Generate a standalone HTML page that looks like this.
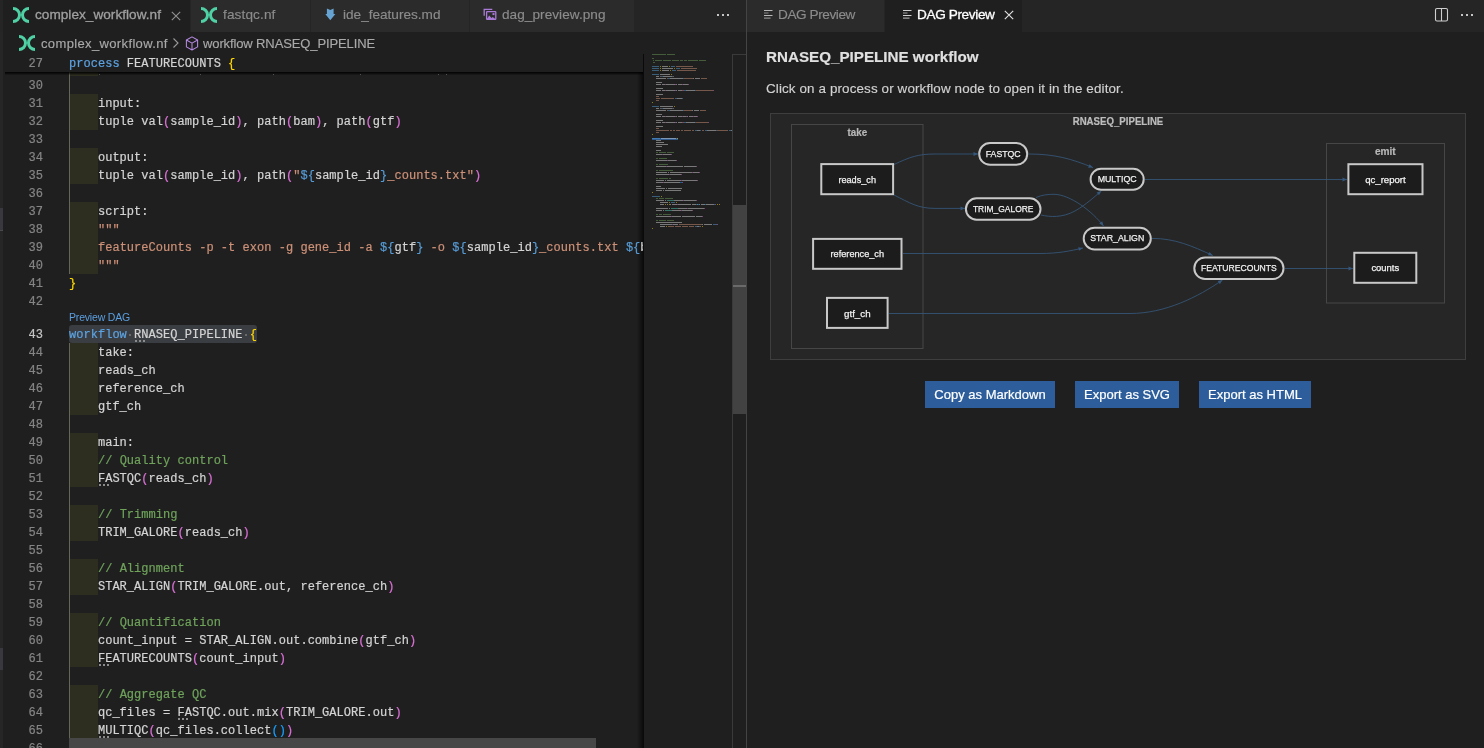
<!DOCTYPE html>
<html><head><meta charset="utf-8">
<style>
*{margin:0;padding:0;box-sizing:border-box}
html,body{width:1484px;height:748px;overflow:hidden;background:#1f1f1f;font-family:"Liberation Sans",sans-serif}
.abs{position:absolute}
#tabsL{position:absolute;left:0;top:0;width:746px;height:32px;background:#252525}
#tabsR{position:absolute;left:747px;top:0;width:737px;height:32px;background:#252525}
.tab{position:absolute;top:0;height:32px;background:#2b2b2b;color:#8c8c8c;font-size:13.6px;line-height:32px;white-space:nowrap}
.tab span{will-change:transform;-webkit-text-stroke:0.15px currentColor}
.tab.act span{-webkit-text-stroke:0.3px currentColor}
.tab.act{background:#1f1f1f}
.code{position:absolute;left:0;top:0;width:643px;height:748px;overflow:hidden}
.ln{position:absolute;left:0;width:43px;text-align:right;font-family:"Liberation Mono",monospace;font-size:12px;line-height:18px;color:#858585;padding-top:1px;will-change:transform;-webkit-text-stroke:0.2px currentColor}
.cl{position:absolute;left:69px;font-family:"Liberation Mono",monospace;font-size:12px;line-height:18px;color:#d4d4d4;white-space:pre;padding-top:1px;letter-spacing:0.03px;will-change:transform;-webkit-text-stroke:0.2px currentColor}
.k{color:#5da3e2}.b{color:#ffd700}.p{color:#da70d6}.s{color:#ce9178}.c{color:#6fa35b}.i{color:#569cd6}.q{color:#179fff}
.ind{position:absolute;left:70px;width:28px;height:18px;background:#2d2d20}
.guide{position:absolute;left:69px;width:1px;background:#65655b}
.btn{position:absolute;top:381px;height:27px;background:#2d5e9b;color:#fff;font-size:13px;line-height:27px;text-align:center;will-change:transform;-webkit-text-stroke:0.2px #fff}

.cl span{-webkit-text-stroke:0.2px currentColor}
.txt{will-change:transform;-webkit-text-stroke:0.15px currentColor}

</style></head><body>
<div class="abs" style="left:0;top:32px;width:3px;height:716px;background:#262626"></div>
<div class="abs" style="left:0;top:208px;width:3px;height:23px;background:#38383e;border-bottom:1px solid #4a4a4e"></div>
<div class="abs" style="left:0;top:648px;width:3px;height:22px;background:#38383e"></div>
<div id="tabsL">
<div class="tab act" style="left:3px;width:187px;color:#a0a0a0"><svg class="abs" style="left:10px;top:7px" width="16" height="16" viewBox="0 0 16 16"><path d="M0 1.5 A6.5 6.5 0 0 1 0 14.5 M16 1.5 A6.5 6.5 0 0 0 16 14.5" stroke="#4fd1a5" stroke-width="3" fill="none"/></svg><span style="left:32px;position:absolute;top:-1px;letter-spacing:0.03px">complex_workflow.nf</span><svg class="abs" style="left:168px;top:11px" width="10" height="10" viewBox="0 0 10 10"><path d="M0.8 0.8 L9.2 9.2 M9.2 0.8 L0.8 9.2" stroke="#8f8f8f" stroke-width="1.15"/></svg></div>
<div class="tab" style="left:191px;width:119px"><svg class="abs" style="left:10px;top:7px" width="16" height="16" viewBox="0 0 16 16"><path d="M0 1.5 A6.5 6.5 0 0 1 0 14.5 M16 1.5 A6.5 6.5 0 0 0 16 14.5" stroke="#4fd1a5" stroke-width="3" fill="none"/></svg><span style="left:32px;position:absolute;top:-1px;letter-spacing:0.12px">fastqc.nf</span></div>
<div class="tab" style="left:311px;width:158px"><svg class="abs" style="left:14px;top:8px" width="11" height="13" viewBox="0 0 11 13"><path d="M1.9 0.5 L5.3 1.9 L8.6 0.5 L8.6 6 L10.4 6 L5.3 12.3 L0.3 6 L1.9 6 Z" fill="#66a3d2"/></svg><span style="left:32px;position:absolute;top:-1px;letter-spacing:0.0px">ide_features.md</span></div>
<div class="tab" style="left:470px;width:164px"><svg class="abs" style="left:13px;top:8px" width="14" height="13" viewBox="0 0 14 13"><path d="M1.2 7.8 V1.3 H9.3" stroke="#a97bd6" stroke-width="1.3" fill="none"/><rect x="3.6" y="3.6" width="9.2" height="7.8" rx="0.6" fill="none" stroke="#a97bd6" stroke-width="1.3"/><path d="M3.6 11.4 L6.2 7.6 L8.5 10 L9.8 9 L12.8 11.4 Z" fill="#a97bd6"/><rect x="9.5" y="5.1" width="2" height="2" fill="#a97bd6"/></svg><span style="left:32px;position:absolute;top:-1px;letter-spacing:0.05px">dag_preview.png</span></div>
<div class="abs" style="left:717px;top:14px;width:2px;height:2px;background:#c5c5c5"></div><div class="abs" style="left:722px;top:14px;width:2px;height:2px;background:#c5c5c5"></div><div class="abs" style="left:727px;top:14px;width:2px;height:2px;background:#c5c5c5"></div>
</div>
<div class="abs" style="left:746px;top:0;width:1px;height:748px;background:#444"></div>
<div id="tabsR">
<div class="tab" style="left:0;width:137px"><svg class="abs" style="left:16.5px;top:10px" width="10" height="10" viewBox="0 0 10 10"><path d="M0 0.5H8.5M0 5.5H8.5" stroke="#b8b8b8" stroke-width="1.2"/><path d="M0 3H4.5M0 8.1H6.5" stroke="#8a8a8a" stroke-width="1.2"/></svg><span style="left:31px;position:absolute;top:-1px;letter-spacing:-0.42px">DAG Preview</span></div>
<div class="tab act" style="left:138px;width:137px;color:#ffffff"><svg class="abs" style="left:17.5px;top:10px" width="10" height="10" viewBox="0 0 10 10"><path d="M0 0.5H8.5M0 5.5H8.5" stroke="#d0d0d0" stroke-width="1.2"/><path d="M0 3H4.5M0 8.1H6.5" stroke="#a0a0a0" stroke-width="1.2"/></svg><span style="left:32px;position:absolute;top:-1px;letter-spacing:-0.37px">DAG Preview</span><svg class="abs" style="left:119px;top:10px" width="10" height="10" viewBox="0 0 10 10"><path d="M0.8 0.8 L9.2 9.2 M9.2 0.8 L0.8 9.2" stroke="#e0e0e0" stroke-width="1.15"/></svg></div>
<svg class="abs" style="left:687px;top:7px" width="15" height="15" viewBox="0 0 15 15"><rect x="1.5" y="1.5" width="12" height="12.5" rx="1.5" fill="none" stroke="#cfcfcf" stroke-width="1.1"/><path d="M7.5 1.5V14" stroke="#cfcfcf" stroke-width="1.1"/></svg>
<div class="abs" style="left:714px;top:14px;width:2px;height:2px;background:#c5c5c5"></div><div class="abs" style="left:719px;top:14px;width:2px;height:2px;background:#c5c5c5"></div><div class="abs" style="left:724px;top:14px;width:2px;height:2px;background:#c5c5c5"></div>
</div>
<div class="abs" style="left:0;top:32px;width:746px;height:22px;font-size:13px;line-height:22px;color:#a9a9a9;white-space:nowrap;will-change:transform;-webkit-text-stroke:0.15px #a9a9a9">
<svg class="abs" style="left:19px;top:3px" width="16" height="16" viewBox="0 0 16 16"><path d="M0 1.5 A6.5 6.5 0 0 1 0 14.5 M16 1.5 A6.5 6.5 0 0 0 16 14.5" stroke="#4fd1a5" stroke-width="3" fill="none"/></svg>
<span class="abs" style="left:41px;top:1px;letter-spacing:0.36px">complex_workflow.nf</span>
<svg class="abs" style="left:172px;top:6px" width="8" height="11" viewBox="0 0 8 11"><path d="M1.5 0.5 L6 5 L1.5 9.5" stroke="#9a9a9a" stroke-width="1.1" fill="none"/></svg>
<svg class="abs" style="left:185px;top:4px" width="14" height="15" viewBox="0 0 14 15"><path d="M7 0.9 L12.6 4 V10.9 L7 14 L1.4 10.9 V4 Z M1.4 4 L7 7.1 L12.6 4 M7 7.1 V14" stroke="#b58ae2" stroke-width="1.05" fill="none" stroke-linejoin="round"/></svg>
<span class="abs" style="left:203px;top:1px;letter-spacing:-0.12px">workflow RNASEQ_PIPELINE</span>
</div>
<div class="abs" style="left:637px;top:54px;width:7px;height:694px;background:linear-gradient(to right,rgba(0,0,0,0),rgba(0,0,0,0.7))"></div>
<div class="abs" style="left:644px;top:54px;width:89px;height:694px;background:#1f1f1f"></div>
<div class="abs" style="left:652px;top:138px;width:26px;height:2px;background:#2f5b8f"></div>
<svg class="abs" style="left:644px;top:54px" width="89" height="694" viewBox="644 54 89 694"><rect x="652" y="54" width="14" height="1" fill="#6a9955" opacity="0.5"/><rect x="667" y="54" width="8" height="1" fill="#6a9955" opacity="0.5"/><rect x="652" y="58" width="2" height="1" fill="#6a9955" opacity="0.5"/><rect x="653" y="60" width="1" height="1" fill="#6a9955" opacity="0.5"/><rect x="655" y="60" width="7" height="1" fill="#6a9955" opacity="0.5"/><rect x="663" y="60" width="8" height="1" fill="#6a9955" opacity="0.5"/><rect x="672" y="60" width="7" height="1" fill="#6a9955" opacity="0.5"/><rect x="680" y="60" width="3" height="1" fill="#6a9955" opacity="0.5"/><rect x="684" y="60" width="3" height="1" fill="#6a9955" opacity="0.5"/><rect x="688" y="60" width="10" height="1" fill="#6a9955" opacity="0.5"/><rect x="699" y="60" width="7" height="1" fill="#6a9955" opacity="0.5"/><rect x="653" y="62" width="2" height="1" fill="#6a9955" opacity="0.5"/><rect x="652" y="66" width="7" height="1" fill="#569cd6" opacity="0.5"/><rect x="660" y="66" width="1" height="1" fill="#ffd700" opacity="0.5"/><rect x="662" y="66" width="6" height="1" fill="#d4d4d4" opacity="0.5"/><rect x="669" y="66" width="1" height="1" fill="#ffd700" opacity="0.5"/><rect x="671" y="66" width="4" height="1" fill="#569cd6" opacity="0.5"/><rect x="676" y="66" width="17" height="1" fill="#ce9178" opacity="0.5"/><rect x="652" y="68" width="7" height="1" fill="#569cd6" opacity="0.5"/><rect x="660" y="68" width="1" height="1" fill="#ffd700" opacity="0.5"/><rect x="662" y="68" width="11" height="1" fill="#d4d4d4" opacity="0.5"/><rect x="674" y="68" width="1" height="1" fill="#ffd700" opacity="0.5"/><rect x="676" y="68" width="4" height="1" fill="#569cd6" opacity="0.5"/><rect x="681" y="68" width="16" height="1" fill="#ce9178" opacity="0.5"/><rect x="652" y="70" width="7" height="1" fill="#569cd6" opacity="0.5"/><rect x="660" y="70" width="1" height="1" fill="#ffd700" opacity="0.5"/><rect x="662" y="70" width="7" height="1" fill="#d4d4d4" opacity="0.5"/><rect x="670" y="70" width="1" height="1" fill="#ffd700" opacity="0.5"/><rect x="672" y="70" width="4" height="1" fill="#569cd6" opacity="0.5"/><rect x="677" y="70" width="19" height="1" fill="#ce9178" opacity="0.5"/><rect x="652" y="74" width="7" height="1" fill="#569cd6" opacity="0.5"/><rect x="660" y="74" width="10" height="1" fill="#d4d4d4" opacity="0.5"/><rect x="671" y="74" width="1" height="1" fill="#ffd700" opacity="0.5"/><rect x="656" y="76" width="3" height="1" fill="#d4d4d4" opacity="0.5"/><rect x="660" y="76" width="1" height="1" fill="#ce9178" opacity="0.5"/><rect x="661" y="76" width="2" height="1" fill="#569cd6" opacity="0.5"/><rect x="663" y="76" width="9" height="1" fill="#d4d4d4" opacity="0.5"/><rect x="672" y="76" width="1" height="1" fill="#569cd6" opacity="0.5"/><rect x="673" y="76" width="1" height="1" fill="#ce9178" opacity="0.5"/><rect x="656" y="78" width="10" height="1" fill="#d4d4d4" opacity="0.5"/><rect x="667" y="78" width="1" height="1" fill="#ce9178" opacity="0.5"/><rect x="668" y="78" width="2" height="1" fill="#569cd6" opacity="0.5"/><rect x="670" y="78" width="13" height="1" fill="#d4d4d4" opacity="0.5"/><rect x="683" y="78" width="1" height="1" fill="#569cd6" opacity="0.5"/><rect x="684" y="78" width="9" height="1" fill="#ce9178" opacity="0.5"/><rect x="693" y="78" width="1" height="1" fill="#d4d4d4" opacity="0.5"/><rect x="695" y="78" width="5" height="1" fill="#d4d4d4" opacity="0.5"/><rect x="701" y="78" width="6" height="1" fill="#ce9178" opacity="0.5"/><rect x="656" y="82" width="6" height="1" fill="#d4d4d4" opacity="0.5"/><rect x="656" y="84" width="5" height="1" fill="#d4d4d4" opacity="0.5"/><rect x="662" y="84" width="3" height="1" fill="#d4d4d4" opacity="0.5"/><rect x="665" y="84" width="1" height="1" fill="#da70d6" opacity="0.5"/><rect x="666" y="84" width="9" height="1" fill="#d4d4d4" opacity="0.5"/><rect x="675" y="84" width="1" height="1" fill="#da70d6" opacity="0.5"/><rect x="676" y="84" width="1" height="1" fill="#d4d4d4" opacity="0.5"/><rect x="678" y="84" width="4" height="1" fill="#d4d4d4" opacity="0.5"/><rect x="682" y="84" width="1" height="1" fill="#da70d6" opacity="0.5"/><rect x="683" y="84" width="5" height="1" fill="#d4d4d4" opacity="0.5"/><rect x="688" y="84" width="1" height="1" fill="#da70d6" opacity="0.5"/><rect x="656" y="88" width="7" height="1" fill="#d4d4d4" opacity="0.5"/><rect x="656" y="90" width="5" height="1" fill="#d4d4d4" opacity="0.5"/><rect x="662" y="90" width="3" height="1" fill="#d4d4d4" opacity="0.5"/><rect x="665" y="90" width="1" height="1" fill="#da70d6" opacity="0.5"/><rect x="666" y="90" width="9" height="1" fill="#d4d4d4" opacity="0.5"/><rect x="675" y="90" width="1" height="1" fill="#da70d6" opacity="0.5"/><rect x="676" y="90" width="1" height="1" fill="#d4d4d4" opacity="0.5"/><rect x="678" y="90" width="4" height="1" fill="#d4d4d4" opacity="0.5"/><rect x="682" y="90" width="1" height="1" fill="#da70d6" opacity="0.5"/><rect x="683" y="90" width="1" height="1" fill="#ce9178" opacity="0.5"/><rect x="684" y="90" width="2" height="1" fill="#569cd6" opacity="0.5"/><rect x="686" y="90" width="9" height="1" fill="#d4d4d4" opacity="0.5"/><rect x="695" y="90" width="1" height="1" fill="#569cd6" opacity="0.5"/><rect x="696" y="90" width="17" height="1" fill="#ce9178" opacity="0.5"/><rect x="713" y="90" width="1" height="1" fill="#da70d6" opacity="0.5"/><rect x="656" y="94" width="7" height="1" fill="#d4d4d4" opacity="0.5"/><rect x="656" y="96" width="3" height="1" fill="#ce9178" opacity="0.5"/><rect x="656" y="98" width="4" height="1" fill="#ce9178" opacity="0.5"/><rect x="661" y="98" width="13" height="1" fill="#ce9178" opacity="0.5"/><rect x="675" y="98" width="2" height="1" fill="#569cd6" opacity="0.5"/><rect x="677" y="98" width="5" height="1" fill="#d4d4d4" opacity="0.5"/><rect x="682" y="98" width="1" height="1" fill="#569cd6" opacity="0.5"/><rect x="656" y="100" width="3" height="1" fill="#ce9178" opacity="0.5"/><rect x="652" y="102" width="1" height="1" fill="#ffd700" opacity="0.5"/><rect x="652" y="106" width="7" height="1" fill="#569cd6" opacity="0.5"/><rect x="660" y="106" width="13" height="1" fill="#d4d4d4" opacity="0.5"/><rect x="674" y="106" width="1" height="1" fill="#ffd700" opacity="0.5"/><rect x="656" y="108" width="3" height="1" fill="#d4d4d4" opacity="0.5"/><rect x="660" y="108" width="1" height="1" fill="#ce9178" opacity="0.5"/><rect x="661" y="108" width="2" height="1" fill="#569cd6" opacity="0.5"/><rect x="663" y="108" width="9" height="1" fill="#d4d4d4" opacity="0.5"/><rect x="672" y="108" width="1" height="1" fill="#569cd6" opacity="0.5"/><rect x="673" y="108" width="1" height="1" fill="#ce9178" opacity="0.5"/><rect x="656" y="110" width="10" height="1" fill="#d4d4d4" opacity="0.5"/><rect x="667" y="110" width="1" height="1" fill="#ce9178" opacity="0.5"/><rect x="668" y="110" width="2" height="1" fill="#569cd6" opacity="0.5"/><rect x="670" y="110" width="13" height="1" fill="#d4d4d4" opacity="0.5"/><rect x="683" y="110" width="1" height="1" fill="#569cd6" opacity="0.5"/><rect x="684" y="110" width="8" height="1" fill="#ce9178" opacity="0.5"/><rect x="692" y="110" width="1" height="1" fill="#d4d4d4" opacity="0.5"/><rect x="694" y="110" width="5" height="1" fill="#d4d4d4" opacity="0.5"/><rect x="700" y="110" width="6" height="1" fill="#ce9178" opacity="0.5"/><rect x="656" y="114" width="6" height="1" fill="#d4d4d4" opacity="0.5"/><rect x="656" y="116" width="5" height="1" fill="#d4d4d4" opacity="0.5"/><rect x="662" y="116" width="3" height="1" fill="#d4d4d4" opacity="0.5"/><rect x="665" y="116" width="1" height="1" fill="#da70d6" opacity="0.5"/><rect x="666" y="116" width="9" height="1" fill="#d4d4d4" opacity="0.5"/><rect x="675" y="116" width="1" height="1" fill="#da70d6" opacity="0.5"/><rect x="676" y="116" width="1" height="1" fill="#d4d4d4" opacity="0.5"/><rect x="678" y="116" width="4" height="1" fill="#d4d4d4" opacity="0.5"/><rect x="682" y="116" width="1" height="1" fill="#da70d6" opacity="0.5"/><rect x="683" y="116" width="3" height="1" fill="#d4d4d4" opacity="0.5"/><rect x="686" y="116" width="1" height="1" fill="#da70d6" opacity="0.5"/><rect x="687" y="116" width="1" height="1" fill="#d4d4d4" opacity="0.5"/><rect x="689" y="116" width="4" height="1" fill="#d4d4d4" opacity="0.5"/><rect x="693" y="116" width="1" height="1" fill="#da70d6" opacity="0.5"/><rect x="694" y="116" width="3" height="1" fill="#d4d4d4" opacity="0.5"/><rect x="697" y="116" width="1" height="1" fill="#da70d6" opacity="0.5"/><rect x="656" y="120" width="7" height="1" fill="#d4d4d4" opacity="0.5"/><rect x="656" y="122" width="5" height="1" fill="#d4d4d4" opacity="0.5"/><rect x="662" y="122" width="3" height="1" fill="#d4d4d4" opacity="0.5"/><rect x="665" y="122" width="1" height="1" fill="#da70d6" opacity="0.5"/><rect x="666" y="122" width="9" height="1" fill="#d4d4d4" opacity="0.5"/><rect x="675" y="122" width="1" height="1" fill="#da70d6" opacity="0.5"/><rect x="676" y="122" width="1" height="1" fill="#d4d4d4" opacity="0.5"/><rect x="678" y="122" width="4" height="1" fill="#d4d4d4" opacity="0.5"/><rect x="682" y="122" width="1" height="1" fill="#da70d6" opacity="0.5"/><rect x="683" y="122" width="1" height="1" fill="#ce9178" opacity="0.5"/><rect x="684" y="122" width="2" height="1" fill="#569cd6" opacity="0.5"/><rect x="686" y="122" width="9" height="1" fill="#d4d4d4" opacity="0.5"/><rect x="695" y="122" width="1" height="1" fill="#569cd6" opacity="0.5"/><rect x="696" y="122" width="12" height="1" fill="#ce9178" opacity="0.5"/><rect x="708" y="122" width="1" height="1" fill="#da70d6" opacity="0.5"/><rect x="656" y="126" width="7" height="1" fill="#d4d4d4" opacity="0.5"/><rect x="656" y="128" width="3" height="1" fill="#ce9178" opacity="0.5"/><rect x="656" y="130" width="13" height="1" fill="#ce9178" opacity="0.5"/><rect x="670" y="130" width="2" height="1" fill="#ce9178" opacity="0.5"/><rect x="673" y="130" width="2" height="1" fill="#ce9178" opacity="0.5"/><rect x="676" y="130" width="4" height="1" fill="#ce9178" opacity="0.5"/><rect x="681" y="130" width="2" height="1" fill="#ce9178" opacity="0.5"/><rect x="684" y="130" width="7" height="1" fill="#ce9178" opacity="0.5"/><rect x="692" y="130" width="2" height="1" fill="#ce9178" opacity="0.5"/><rect x="695" y="130" width="2" height="1" fill="#569cd6" opacity="0.5"/><rect x="697" y="130" width="3" height="1" fill="#d4d4d4" opacity="0.5"/><rect x="700" y="130" width="1" height="1" fill="#569cd6" opacity="0.5"/><rect x="702" y="130" width="2" height="1" fill="#ce9178" opacity="0.5"/><rect x="705" y="130" width="2" height="1" fill="#569cd6" opacity="0.5"/><rect x="707" y="130" width="9" height="1" fill="#d4d4d4" opacity="0.5"/><rect x="716" y="130" width="1" height="1" fill="#569cd6" opacity="0.5"/><rect x="717" y="130" width="11" height="1" fill="#ce9178" opacity="0.5"/><rect x="729" y="130" width="2" height="1" fill="#569cd6" opacity="0.5"/><rect x="731" y="130" width="1" height="1" fill="#d4d4d4" opacity="0.5"/><rect x="656" y="132" width="3" height="1" fill="#ce9178" opacity="0.5"/><rect x="652" y="134" width="1" height="1" fill="#ffd700" opacity="0.5"/><rect x="652" y="138" width="8" height="1" fill="#569cd6" opacity="0.5"/><rect x="661" y="138" width="15" height="1" fill="#d4d4d4" opacity="0.5"/><rect x="677" y="138" width="1" height="1" fill="#ffd700" opacity="0.5"/><rect x="656" y="140" width="5" height="1" fill="#d4d4d4" opacity="0.5"/><rect x="656" y="142" width="8" height="1" fill="#d4d4d4" opacity="0.5"/><rect x="656" y="144" width="12" height="1" fill="#d4d4d4" opacity="0.5"/><rect x="656" y="146" width="6" height="1" fill="#d4d4d4" opacity="0.5"/><rect x="656" y="150" width="5" height="1" fill="#d4d4d4" opacity="0.5"/><rect x="656" y="152" width="2" height="1" fill="#6a9955" opacity="0.5"/><rect x="659" y="152" width="7" height="1" fill="#6a9955" opacity="0.5"/><rect x="667" y="152" width="7" height="1" fill="#6a9955" opacity="0.5"/><rect x="656" y="154" width="6" height="1" fill="#d4d4d4" opacity="0.5"/><rect x="662" y="154" width="1" height="1" fill="#da70d6" opacity="0.5"/><rect x="663" y="154" width="8" height="1" fill="#d4d4d4" opacity="0.5"/><rect x="671" y="154" width="1" height="1" fill="#da70d6" opacity="0.5"/><rect x="656" y="158" width="2" height="1" fill="#6a9955" opacity="0.5"/><rect x="659" y="158" width="8" height="1" fill="#6a9955" opacity="0.5"/><rect x="656" y="160" width="11" height="1" fill="#d4d4d4" opacity="0.5"/><rect x="667" y="160" width="1" height="1" fill="#da70d6" opacity="0.5"/><rect x="668" y="160" width="8" height="1" fill="#d4d4d4" opacity="0.5"/><rect x="676" y="160" width="1" height="1" fill="#da70d6" opacity="0.5"/><rect x="656" y="164" width="2" height="1" fill="#6a9955" opacity="0.5"/><rect x="659" y="164" width="9" height="1" fill="#6a9955" opacity="0.5"/><rect x="656" y="166" width="10" height="1" fill="#d4d4d4" opacity="0.5"/><rect x="666" y="166" width="1" height="1" fill="#da70d6" opacity="0.5"/><rect x="667" y="166" width="16" height="1" fill="#d4d4d4" opacity="0.5"/><rect x="684" y="166" width="12" height="1" fill="#d4d4d4" opacity="0.5"/><rect x="696" y="166" width="1" height="1" fill="#da70d6" opacity="0.5"/><rect x="656" y="170" width="2" height="1" fill="#6a9955" opacity="0.5"/><rect x="659" y="170" width="14" height="1" fill="#6a9955" opacity="0.5"/><rect x="656" y="172" width="11" height="1" fill="#d4d4d4" opacity="0.5"/><rect x="668" y="172" width="1" height="1" fill="#d4d4d4" opacity="0.5"/><rect x="670" y="172" width="22" height="1" fill="#d4d4d4" opacity="0.5"/><rect x="692" y="172" width="1" height="1" fill="#da70d6" opacity="0.5"/><rect x="693" y="172" width="6" height="1" fill="#d4d4d4" opacity="0.5"/><rect x="699" y="172" width="1" height="1" fill="#da70d6" opacity="0.5"/><rect x="656" y="174" width="13" height="1" fill="#d4d4d4" opacity="0.5"/><rect x="669" y="174" width="1" height="1" fill="#da70d6" opacity="0.5"/><rect x="670" y="174" width="11" height="1" fill="#d4d4d4" opacity="0.5"/><rect x="681" y="174" width="1" height="1" fill="#da70d6" opacity="0.5"/><rect x="656" y="178" width="2" height="1" fill="#6a9955" opacity="0.5"/><rect x="659" y="178" width="9" height="1" fill="#6a9955" opacity="0.5"/><rect x="669" y="178" width="2" height="1" fill="#6a9955" opacity="0.5"/><rect x="656" y="180" width="8" height="1" fill="#d4d4d4" opacity="0.5"/><rect x="665" y="180" width="1" height="1" fill="#d4d4d4" opacity="0.5"/><rect x="667" y="180" width="14" height="1" fill="#d4d4d4" opacity="0.5"/><rect x="681" y="180" width="1" height="1" fill="#da70d6" opacity="0.5"/><rect x="682" y="180" width="15" height="1" fill="#d4d4d4" opacity="0.5"/><rect x="697" y="180" width="1" height="1" fill="#da70d6" opacity="0.5"/><rect x="656" y="182" width="7" height="1" fill="#d4d4d4" opacity="0.5"/><rect x="663" y="182" width="1" height="1" fill="#da70d6" opacity="0.5"/><rect x="664" y="182" width="16" height="1" fill="#d4d4d4" opacity="0.5"/><rect x="680" y="182" width="2" height="1" fill="#179fff" opacity="0.5"/><rect x="682" y="182" width="1" height="1" fill="#da70d6" opacity="0.5"/><rect x="656" y="186" width="5" height="1" fill="#d4d4d4" opacity="0.5"/><rect x="656" y="188" width="9" height="1" fill="#d4d4d4" opacity="0.5"/><rect x="666" y="188" width="1" height="1" fill="#d4d4d4" opacity="0.5"/><rect x="668" y="188" width="14" height="1" fill="#d4d4d4" opacity="0.5"/><rect x="656" y="190" width="6" height="1" fill="#d4d4d4" opacity="0.5"/><rect x="663" y="190" width="1" height="1" fill="#d4d4d4" opacity="0.5"/><rect x="665" y="190" width="16" height="1" fill="#d4d4d4" opacity="0.5"/><rect x="652" y="192" width="1" height="1" fill="#ffd700" opacity="0.5"/><rect x="652" y="196" width="8" height="1" fill="#569cd6" opacity="0.5"/><rect x="661" y="196" width="1" height="1" fill="#ffd700" opacity="0.5"/><rect x="656" y="198" width="2" height="1" fill="#6a9955" opacity="0.5"/><rect x="659" y="198" width="5" height="1" fill="#6a9955" opacity="0.5"/><rect x="665" y="198" width="8" height="1" fill="#6a9955" opacity="0.5"/><rect x="656" y="200" width="8" height="1" fill="#d4d4d4" opacity="0.5"/><rect x="665" y="200" width="1" height="1" fill="#d4d4d4" opacity="0.5"/><rect x="667" y="200" width="7" height="1" fill="#4ec9b0" opacity="0.5"/><rect x="674" y="200" width="9" height="1" fill="#d4d4d4" opacity="0.5"/><rect x="683" y="200" width="1" height="1" fill="#da70d6" opacity="0.5"/><rect x="684" y="200" width="12" height="1" fill="#d4d4d4" opacity="0.5"/><rect x="696" y="200" width="1" height="1" fill="#da70d6" opacity="0.5"/><rect x="660" y="202" width="8" height="1" fill="#d4d4d4" opacity="0.5"/><rect x="669" y="202" width="1" height="1" fill="#ffd700" opacity="0.5"/><rect x="671" y="202" width="4" height="1" fill="#569cd6" opacity="0.5"/><rect x="676" y="202" width="1" height="1" fill="#ffd700" opacity="0.5"/><rect x="660" y="204" width="4" height="1" fill="#d4d4d4" opacity="0.5"/><rect x="665" y="204" width="1" height="1" fill="#ffd700" opacity="0.5"/><rect x="667" y="204" width="1" height="1" fill="#d4d4d4" opacity="0.5"/><rect x="669" y="204" width="1" height="1" fill="#ffd700" opacity="0.5"/><rect x="670" y="204" width="1" height="1" fill="#d4d4d4" opacity="0.5"/><rect x="672" y="204" width="5" height="1" fill="#d4d4d4" opacity="0.5"/><rect x="677" y="204" width="1" height="1" fill="#da70d6" opacity="0.5"/><rect x="678" y="204" width="13" height="1" fill="#d4d4d4" opacity="0.5"/><rect x="692" y="204" width="4" height="1" fill="#d4d4d4" opacity="0.5"/><rect x="696" y="204" width="1" height="1" fill="#179fff" opacity="0.5"/><rect x="697" y="204" width="1" height="1" fill="#d4d4d4" opacity="0.5"/><rect x="698" y="204" width="1" height="1" fill="#179fff" opacity="0.5"/><rect x="699" y="204" width="1" height="1" fill="#d4d4d4" opacity="0.5"/><rect x="701" y="204" width="4" height="1" fill="#d4d4d4" opacity="0.5"/><rect x="705" y="204" width="1" height="1" fill="#179fff" opacity="0.5"/><rect x="706" y="204" width="8" height="1" fill="#d4d4d4" opacity="0.5"/><rect x="714" y="204" width="1" height="1" fill="#179fff" opacity="0.5"/><rect x="715" y="204" width="1" height="1" fill="#da70d6" opacity="0.5"/><rect x="717" y="204" width="1" height="1" fill="#ffd700" opacity="0.5"/><rect x="719" y="204" width="1" height="1" fill="#ffd700" opacity="0.5"/><rect x="656" y="208" width="12" height="1" fill="#d4d4d4" opacity="0.5"/><rect x="669" y="208" width="1" height="1" fill="#d4d4d4" opacity="0.5"/><rect x="671" y="208" width="7" height="1" fill="#4ec9b0" opacity="0.5"/><rect x="678" y="208" width="9" height="1" fill="#d4d4d4" opacity="0.5"/><rect x="687" y="208" width="1" height="1" fill="#da70d6" opacity="0.5"/><rect x="688" y="208" width="16" height="1" fill="#d4d4d4" opacity="0.5"/><rect x="704" y="208" width="1" height="1" fill="#da70d6" opacity="0.5"/><rect x="656" y="210" width="6" height="1" fill="#d4d4d4" opacity="0.5"/><rect x="663" y="210" width="1" height="1" fill="#d4d4d4" opacity="0.5"/><rect x="665" y="210" width="7" height="1" fill="#4ec9b0" opacity="0.5"/><rect x="672" y="210" width="9" height="1" fill="#d4d4d4" opacity="0.5"/><rect x="681" y="210" width="1" height="1" fill="#da70d6" opacity="0.5"/><rect x="682" y="210" width="10" height="1" fill="#d4d4d4" opacity="0.5"/><rect x="692" y="210" width="1" height="1" fill="#da70d6" opacity="0.5"/><rect x="656" y="214" width="2" height="1" fill="#6a9955" opacity="0.5"/><rect x="659" y="214" width="3" height="1" fill="#6a9955" opacity="0.5"/><rect x="663" y="214" width="8" height="1" fill="#6a9955" opacity="0.5"/><rect x="656" y="216" width="15" height="1" fill="#d4d4d4" opacity="0.5"/><rect x="671" y="216" width="1" height="1" fill="#da70d6" opacity="0.5"/><rect x="672" y="216" width="9" height="1" fill="#d4d4d4" opacity="0.5"/><rect x="682" y="216" width="13" height="1" fill="#d4d4d4" opacity="0.5"/><rect x="696" y="216" width="6" height="1" fill="#d4d4d4" opacity="0.5"/><rect x="702" y="216" width="1" height="1" fill="#da70d6" opacity="0.5"/><rect x="656" y="220" width="2" height="1" fill="#6a9955" opacity="0.5"/><rect x="659" y="220" width="7" height="1" fill="#6a9955" opacity="0.5"/><rect x="667" y="220" width="7" height="1" fill="#6a9955" opacity="0.5"/><rect x="656" y="222" width="26" height="1" fill="#d4d4d4" opacity="0.5"/><rect x="660" y="224" width="12" height="1" fill="#d4d4d4" opacity="0.5"/><rect x="672" y="224" width="1" height="1" fill="#da70d6" opacity="0.5"/><rect x="673" y="224" width="5" height="1" fill="#d4d4d4" opacity="0.5"/><rect x="679" y="224" width="23" height="1" fill="#ce9178" opacity="0.5"/><rect x="702" y="224" width="1" height="1" fill="#d4d4d4" opacity="0.5"/><rect x="704" y="224" width="8" height="1" fill="#d4d4d4" opacity="0.5"/><rect x="713" y="224" width="4" height="1" fill="#569cd6" opacity="0.5"/><rect x="717" y="224" width="1" height="1" fill="#da70d6" opacity="0.5"/><rect x="660" y="226" width="5" height="1" fill="#d4d4d4" opacity="0.5"/><rect x="666" y="226" width="1" height="1" fill="#ffd700" opacity="0.5"/><rect x="668" y="226" width="6" height="1" fill="#ce9178" opacity="0.5"/><rect x="675" y="226" width="6" height="1" fill="#ce9178" opacity="0.5"/><rect x="682" y="226" width="6" height="1" fill="#ce9178" opacity="0.5"/><rect x="689" y="226" width="5" height="1" fill="#ce9178" opacity="0.5"/><rect x="695" y="226" width="2" height="1" fill="#569cd6" opacity="0.5"/><rect x="697" y="226" width="2" height="1" fill="#d4d4d4" opacity="0.5"/><rect x="699" y="226" width="1" height="1" fill="#569cd6" opacity="0.5"/><rect x="700" y="226" width="1" height="1" fill="#ce9178" opacity="0.5"/><rect x="702" y="226" width="1" height="1" fill="#ffd700" opacity="0.5"/><rect x="652" y="228" width="1" height="1" fill="#ffd700" opacity="0.5"/></svg>
<div class="abs" style="left:732px;top:54px;width:14px;height:694px;background:#1f1f1f;border-left:1px solid #3a3a3a;border-top:1px solid #3a3a3a"></div>
<div class="abs" style="left:733px;top:205px;width:13px;height:209px;background:#424242"></div>
<div class="abs" style="left:733px;top:285px;width:13px;height:2px;background:#6a6a6a"></div>
<div class="code">
<div class="guide" style="top:72px;height:202px"></div>
<div class="guide" style="top:343px;height:405px"></div>
<div class="ind" style="top:94px"></div>
<div class="ind" style="top:112px"></div>
<div class="ind" style="top:148px"></div>
<div class="ind" style="top:166px"></div>
<div class="ind" style="top:202px"></div>
<div class="ind" style="top:220px"></div>
<div class="ind" style="top:238px"></div>
<div class="ind" style="top:256px"></div>
<div class="ind" style="top:343px"></div>
<div class="ind" style="top:361px"></div>
<div class="ind" style="top:379px"></div>
<div class="ind" style="top:397px"></div>
<div class="ind" style="top:433px"></div>
<div class="ind" style="top:451px"></div>
<div class="ind" style="top:469px"></div>
<div class="ind" style="top:505px"></div>
<div class="ind" style="top:523px"></div>
<div class="ind" style="top:559px"></div>
<div class="ind" style="top:577px"></div>
<div class="ind" style="top:613px"></div>
<div class="ind" style="top:631px"></div>
<div class="ind" style="top:649px"></div>
<div class="ind" style="top:685px"></div>
<div class="ind" style="top:703px"></div>
<div class="ind" style="top:721px"></div>
<div class="ind" style="top:58px"></div>
<div class="abs" style="left:99px;top:74px;width:1px;height:1px;background:#6a6a6a"></div>
<div class="abs" style="left:200px;top:74px;width:1px;height:1px;background:#6a6a6a"></div>
<div class="abs" style="left:273px;top:74px;width:1px;height:1px;background:#6a6a6a"></div>
<div class="abs" style="left:360px;top:74px;width:1px;height:1px;background:#6a6a6a"></div>
<div class="abs" style="left:438px;top:74px;width:1px;height:1px;background:#6a6a6a"></div>
<div class="abs" style="left:446px;top:74px;width:1px;height:1px;background:#6a6a6a"></div>
<div class="abs" style="left:69px;top:325px;width:188px;height:18px;background:#3a3d41;border-radius:3px"></div>
<div class="ln" style="top:76px;color:#858585">30</div>
<div class="ln" style="top:94px;color:#858585">31</div>
<div class="cl" style="top:94px">    input:</div>
<div class="ln" style="top:112px;color:#858585">32</div>
<div class="cl" style="top:112px">    tuple val<span class="p">(</span>sample_id<span class="p">)</span>, path<span class="p">(</span>bam<span class="p">)</span>, path<span class="p">(</span>gtf<span class="p">)</span></div>
<div class="ln" style="top:130px;color:#858585">33</div>
<div class="ln" style="top:148px;color:#858585">34</div>
<div class="cl" style="top:148px">    output:</div>
<div class="ln" style="top:166px;color:#858585">35</div>
<div class="cl" style="top:166px">    tuple val<span class="p">(</span>sample_id<span class="p">)</span>, path<span class="p">(</span><span class="s">&quot;</span><span class="i">${</span>sample_id<span class="i">}</span><span class="s">_counts.txt&quot;</span><span class="p">)</span></div>
<div class="ln" style="top:184px;color:#858585">36</div>
<div class="ln" style="top:202px;color:#858585">37</div>
<div class="cl" style="top:202px">    script:</div>
<div class="ln" style="top:220px;color:#858585">38</div>
<div class="cl" style="top:220px">    <span class="s">&quot;&quot;&quot;</span></div>
<div class="ln" style="top:238px;color:#858585">39</div>
<div class="cl" style="top:238px">    <span class="s">featureCounts -p -t exon -g gene_id -a </span><span class="i">${</span>gtf<span class="i">}</span><span class="s"> -o </span><span class="i">${</span>sample_id<span class="i">}</span><span class="s">_counts.txt </span><span class="i">${</span>bam<span class="i">}</span></div>
<div class="ln" style="top:256px;color:#858585">40</div>
<div class="cl" style="top:256px">    <span class="s">&quot;&quot;&quot;</span></div>
<div class="ln" style="top:274px;color:#858585">41</div>
<div class="cl" style="top:274px"><span class="b">}</span></div>
<div class="ln" style="top:292px;color:#858585">42</div>
<div class="ln" style="top:325px;color:#c6c6c6">43</div>
<div class="cl" style="top:325px"><span class="k">workflow</span> RNASEQ_PIPELINE <span class="b">{</span></div>
<div class="ln" style="top:343px;color:#858585">44</div>
<div class="cl" style="top:343px">    take:</div>
<div class="ln" style="top:361px;color:#858585">45</div>
<div class="cl" style="top:361px">    reads_ch</div>
<div class="ln" style="top:379px;color:#858585">46</div>
<div class="cl" style="top:379px">    reference_ch</div>
<div class="ln" style="top:397px;color:#858585">47</div>
<div class="cl" style="top:397px">    gtf_ch</div>
<div class="ln" style="top:415px;color:#858585">48</div>
<div class="ln" style="top:433px;color:#858585">49</div>
<div class="cl" style="top:433px">    main:</div>
<div class="ln" style="top:451px;color:#858585">50</div>
<div class="cl" style="top:451px">    <span class="c">// Quality control</span></div>
<div class="ln" style="top:469px;color:#858585">51</div>
<div class="cl" style="top:469px">    FASTQC<span class="p">(</span>reads_ch<span class="p">)</span></div>
<div class="ln" style="top:487px;color:#858585">52</div>
<div class="ln" style="top:505px;color:#858585">53</div>
<div class="cl" style="top:505px">    <span class="c">// Trimming</span></div>
<div class="ln" style="top:523px;color:#858585">54</div>
<div class="cl" style="top:523px">    TRIM_GALORE<span class="p">(</span>reads_ch<span class="p">)</span></div>
<div class="ln" style="top:541px;color:#858585">55</div>
<div class="ln" style="top:559px;color:#858585">56</div>
<div class="cl" style="top:559px">    <span class="c">// Alignment</span></div>
<div class="ln" style="top:577px;color:#858585">57</div>
<div class="cl" style="top:577px">    STAR_ALIGN<span class="p">(</span>TRIM_GALORE.out, reference_ch<span class="p">)</span></div>
<div class="ln" style="top:595px;color:#858585">58</div>
<div class="ln" style="top:613px;color:#858585">59</div>
<div class="cl" style="top:613px">    <span class="c">// Quantification</span></div>
<div class="ln" style="top:631px;color:#858585">60</div>
<div class="cl" style="top:631px">    count_input = STAR_ALIGN.out.combine<span class="p">(</span>gtf_ch<span class="p">)</span></div>
<div class="ln" style="top:649px;color:#858585">61</div>
<div class="cl" style="top:649px">    FEATURECOUNTS<span class="p">(</span>count_input<span class="p">)</span></div>
<div class="ln" style="top:667px;color:#858585">62</div>
<div class="ln" style="top:685px;color:#858585">63</div>
<div class="cl" style="top:685px">    <span class="c">// Aggregate QC</span></div>
<div class="ln" style="top:703px;color:#858585">64</div>
<div class="cl" style="top:703px">    qc_files = FASTQC.out.mix<span class="p">(</span>TRIM_GALORE.out<span class="p">)</span></div>
<div class="ln" style="top:721px;color:#858585">65</div>
<div class="cl" style="top:721px">    MULTIQC<span class="p">(</span>qc_files.collect<span class="q">()</span><span class="p">)</span></div>
<div class="ln" style="top:739px;color:#858585">66</div>
<div class="abs" style="left:129px;top:334px;width:2px;height:2px;background:#6a6a6a"></div>
<div class="abs" style="left:245px;top:334px;width:2px;height:2px;background:#6a6a6a"></div>
<div class="abs" style="left:135px;top:340px;width:2px;height:2px;background:#8c8c8c"></div><div class="abs" style="left:139px;top:340px;width:2px;height:2px;background:#8c8c8c"></div><div class="abs" style="left:143px;top:340px;width:2px;height:2px;background:#8c8c8c"></div>
<div class="abs" style="left:99px;top:484px;width:2px;height:2px;background:#8c8c8c"></div><div class="abs" style="left:103px;top:484px;width:2px;height:2px;background:#8c8c8c"></div><div class="abs" style="left:107px;top:484px;width:2px;height:2px;background:#8c8c8c"></div>
<div class="abs" style="left:99px;top:664px;width:2px;height:2px;background:#8c8c8c"></div><div class="abs" style="left:103px;top:664px;width:2px;height:2px;background:#8c8c8c"></div><div class="abs" style="left:107px;top:664px;width:2px;height:2px;background:#8c8c8c"></div>
<div class="abs" style="left:178px;top:718px;width:2px;height:2px;background:#8c8c8c"></div><div class="abs" style="left:182px;top:718px;width:2px;height:2px;background:#8c8c8c"></div><div class="abs" style="left:186px;top:718px;width:2px;height:2px;background:#8c8c8c"></div>
<div class="abs" style="left:99px;top:736px;width:2px;height:2px;background:#8c8c8c"></div><div class="abs" style="left:103px;top:736px;width:2px;height:2px;background:#8c8c8c"></div><div class="abs" style="left:107px;top:736px;width:2px;height:2px;background:#8c8c8c"></div>
<div class="abs" style="left:69px;top:310px;height:15px;font-size:10.5px;line-height:15px;letter-spacing:-0.18px;color:#5b9fe0;white-space:nowrap;will-change:transform">Preview DAG</div>
<div class="abs" style="left:3px;top:54px;width:640px;height:18px;background:#1f1f1f"></div>
<div class="abs" style="left:5px;top:72px;width:638px;height:3px;background:linear-gradient(to bottom,rgba(0,0,0,0.95),rgba(0,0,0,0.1))"></div>
<div class="ln" style="top:54px">27</div>
<div class="cl" style="top:54px"><span class="k">process</span> FEATURECOUNTS <span class="b">{</span></div>
<div class="abs" style="left:69px;top:738px;width:527px;height:10px;background:#474747"></div>
</div>
<div class="abs txt" style="left:766px;top:47px;font-size:15.2px;line-height:20px;font-weight:bold;color:#e0e0e0;white-space:nowrap">RNASEQ_PIPELINE workflow</div>
<div class="abs txt" style="left:766px;top:80px;font-size:13.4px;line-height:18px;letter-spacing:0.13px;color:#d2d2d2;white-space:nowrap">Click on a process or workflow node to open it in the editor.</div>
<svg class="abs" style="left:0;top:0;will-change:transform" width="1484" height="748" viewBox="0 0 1484 748">
<defs><marker id="ah" markerWidth="8" markerHeight="8" refX="6.5" refY="3.5" orient="auto" markerUnits="userSpaceOnUse"><path d="M2 1.6 L6.5 3.5 L2 5.4 Z" fill="#35577b"/></marker></defs>
<rect x="770.5" y="113.5" width="695" height="246" fill="#262626" stroke="#3e3e3e" stroke-width="1"/>
<text x="1118" y="125.2" text-anchor="middle" font-family="Liberation Sans" font-weight="bold" font-size="10.3" fill="#bdbdbd" stroke="#bdbdbd" stroke-width="0.2" textLength="90.6" lengthAdjust="spacingAndGlyphs">RNASEQ_PIPELINE</text>
<rect x="791.5" y="124.5" width="131.5" height="224" fill="#262626" stroke="#464646" stroke-width="1"/>
<text x="857.4" y="136" text-anchor="middle" font-family="Liberation Sans" font-weight="bold" font-size="10.3" fill="#b8b8b8" stroke="#b8b8b8" stroke-width="0.2" textLength="19.6" lengthAdjust="spacingAndGlyphs">take</text>
<rect x="1326.5" y="143.5" width="118" height="159.5" fill="#262626" stroke="#464646" stroke-width="1"/>
<text x="1385.3" y="155" text-anchor="middle" font-family="Liberation Sans" font-weight="bold" font-size="10.3" fill="#b8b8b8" stroke="#b8b8b8" stroke-width="0.2" textLength="20.8" lengthAdjust="spacingAndGlyphs">emit</text>
<path d="M894 164.5 C910 157 918 154 935 154 L978 154" fill="none" stroke="#35577b" stroke-width="0.85" marker-end="url(#ah)"/>
<path d="M894 195 C910 203 918 208.4 935 208.4 L965 208.4" fill="none" stroke="#35577b" stroke-width="0.85" marker-end="url(#ah)"/>
<path d="M1028.5 154 C1055 154 1072 159 1093 167.6" fill="none" stroke="#35577b" stroke-width="0.85" marker-end="url(#ah)"/>
<path d="M1041 215 C1050 217 1062 218 1075 211 C1087 204 1094 197 1101.3 191" fill="none" stroke="#35577b" stroke-width="0.85" marker-end="url(#ah)"/>
<path d="M1036 197.5 C1042 195 1047 194.3 1054 194.3 C1070 194.5 1092 211 1103.5 226" fill="none" stroke="#35577b" stroke-width="0.85" marker-end="url(#ah)"/>
<path d="M903 253.5 L1040 253.5 C1058 253.5 1070 251 1083 248" fill="none" stroke="#35577b" stroke-width="0.85" marker-end="url(#ah)"/>
<path d="M889 313.5 L1130 313.5 C1165 313.5 1198 297 1222.5 280" fill="none" stroke="#35577b" stroke-width="0.85" marker-end="url(#ah)"/>
<path d="M1152 238.4 C1175 238.4 1192 246 1212.8 255.5" fill="none" stroke="#35577b" stroke-width="0.85" marker-end="url(#ah)"/>
<path d="M1145 179.5 L1347 179.5" fill="none" stroke="#35577b" stroke-width="0.85" marker-end="url(#ah)"/>
<path d="M1285 268.5 L1353 268.5" fill="none" stroke="#35577b" stroke-width="0.85" marker-end="url(#ah)"/>
<rect x="821.3" y="164.1" width="71.80000000000007" height="30.099999999999994" fill="#1c1c1c" stroke="#c8c8c8" stroke-width="2"/>
<text x="857.2" y="182.74999999999997" text-anchor="middle" font-family="Liberation Sans" font-size="9.6" fill="#f2f2f2" stroke="#f2f2f2" stroke-width="0.25" textLength="37.6" lengthAdjust="spacingAndGlyphs">reads_ch</text>
<rect x="813.1" y="238.9" width="88.39999999999998" height="29.900000000000006" fill="#1c1c1c" stroke="#c8c8c8" stroke-width="2"/>
<text x="857.3" y="257.45000000000005" text-anchor="middle" font-family="Liberation Sans" font-size="9.6" fill="#f2f2f2" stroke="#f2f2f2" stroke-width="0.25" textLength="53.5" lengthAdjust="spacingAndGlyphs">reference_ch</text>
<rect x="827" y="297.9" width="60.60000000000002" height="30.0" fill="#1c1c1c" stroke="#c8c8c8" stroke-width="2"/>
<text x="857.3" y="316.5" text-anchor="middle" font-family="Liberation Sans" font-size="9.6" fill="#f2f2f2" stroke="#f2f2f2" stroke-width="0.25" textLength="26.5" lengthAdjust="spacingAndGlyphs">gtf_ch</text>
<rect x="1348.4" y="164.2" width="74.09999999999991" height="30.0" fill="#1c1c1c" stroke="#c8c8c8" stroke-width="2"/>
<text x="1385.45" y="182.79999999999998" text-anchor="middle" font-family="Liberation Sans" font-size="9.6" fill="#f2f2f2" stroke="#f2f2f2" stroke-width="0.25" textLength="40.6" lengthAdjust="spacingAndGlyphs">qc_report</text>
<rect x="1354.3" y="252.8" width="62.0" height="30.0" fill="#1c1c1c" stroke="#c8c8c8" stroke-width="2"/>
<text x="1385.3" y="271.40000000000003" text-anchor="middle" font-family="Liberation Sans" font-size="9.6" fill="#f2f2f2" stroke="#f2f2f2" stroke-width="0.25" textLength="27.8" lengthAdjust="spacingAndGlyphs">counts</text>
<rect x="979.2" y="143.1" width="48.0" height="21.700000000000017" rx="10.850000000000009" ry="10.850000000000009" fill="#1c1c1c" stroke="#c8c8c8" stroke-width="2"/>
<text x="1003.2" y="156.54999999999998" text-anchor="middle" font-family="Liberation Sans" font-size="9.8" fill="#f2f2f2" stroke="#f2f2f2" stroke-width="0.25" textLength="35" lengthAdjust="spacingAndGlyphs">FASTQC</text>
<rect x="965.9" y="198.3" width="74.60000000000002" height="21.399999999999977" rx="10.699999999999989" ry="10.699999999999989" fill="#1c1c1c" stroke="#c8c8c8" stroke-width="2"/>
<text x="1003.2" y="211.6" text-anchor="middle" font-family="Liberation Sans" font-size="9.8" fill="#f2f2f2" stroke="#f2f2f2" stroke-width="0.25" textLength="60.5" lengthAdjust="spacingAndGlyphs">TRIM_GALORE</text>
<rect x="1090.6" y="168.8" width="53.100000000000136" height="20.899999999999977" rx="10.449999999999989" ry="10.449999999999989" fill="#1c1c1c" stroke="#c8c8c8" stroke-width="2"/>
<text x="1117.15" y="181.85" text-anchor="middle" font-family="Liberation Sans" font-size="9.8" fill="#f2f2f2" stroke="#f2f2f2" stroke-width="0.25" textLength="39" lengthAdjust="spacingAndGlyphs">MULTIQC</text>
<rect x="1083.7" y="227.7" width="67.09999999999991" height="21.700000000000017" rx="10.850000000000009" ry="10.850000000000009" fill="#1c1c1c" stroke="#c8c8c8" stroke-width="2"/>
<text x="1117.25" y="241.15" text-anchor="middle" font-family="Liberation Sans" font-size="9.8" fill="#f2f2f2" stroke="#f2f2f2" stroke-width="0.25" textLength="54" lengthAdjust="spacingAndGlyphs">STAR_ALIGN</text>
<rect x="1194.3" y="257.5" width="89.20000000000005" height="21.5" rx="10.75" ry="10.75" fill="#1c1c1c" stroke="#c8c8c8" stroke-width="2"/>
<text x="1238.9" y="270.85" text-anchor="middle" font-family="Liberation Sans" font-size="9.8" fill="#f2f2f2" stroke="#f2f2f2" stroke-width="0.25" textLength="75.8" lengthAdjust="spacingAndGlyphs">FEATURECOUNTS</text>
</svg>
<div class="btn" style="left:925px;width:130px">Copy as Markdown</div>
<div class="btn" style="left:1075px;width:104px">Export as SVG</div>
<div class="btn" style="left:1199px;width:112px">Export as HTML</div>

</body></html>
